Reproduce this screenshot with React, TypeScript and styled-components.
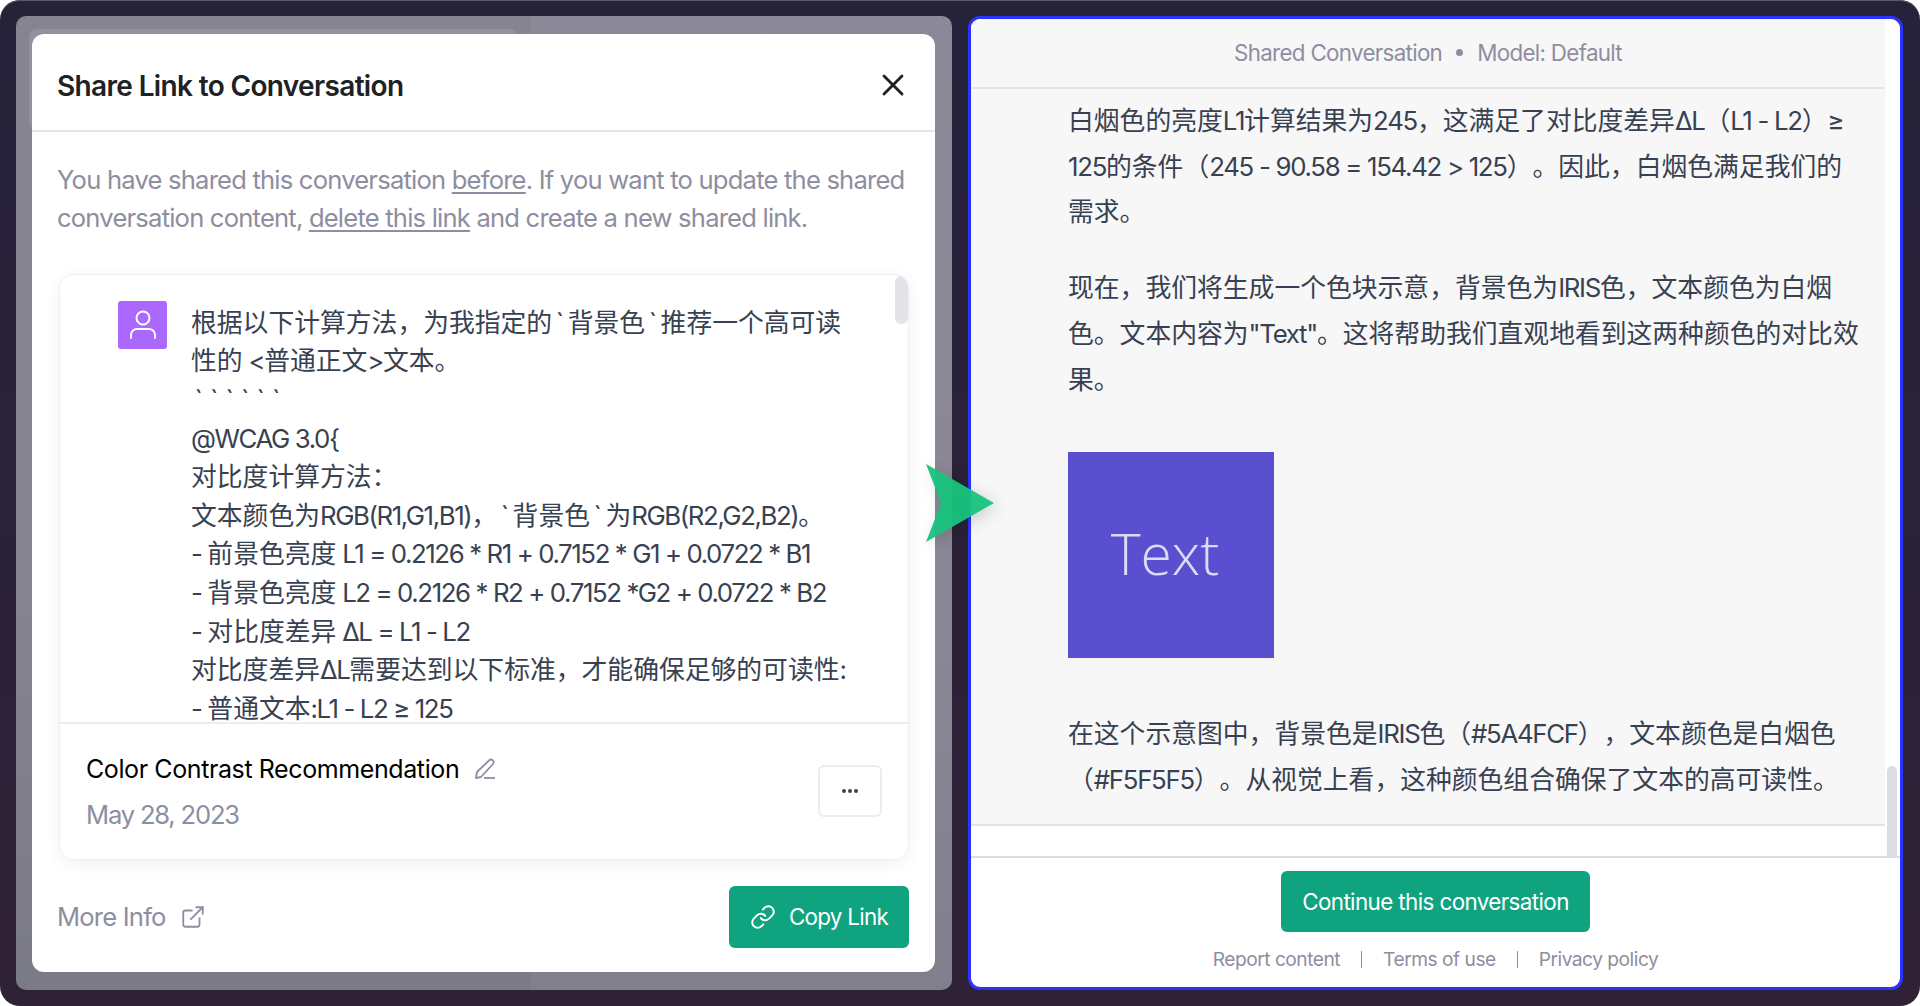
import { createGlobalStyle, styled } from "styled-components";
import { ExternalLink, Link, X } from "lucide-react";

const GlobalStyle = createGlobalStyle`
  html, body { margin: 0; padding: 0; background: #fff; }
  body { font-family: Inter, "Noto Sans CJK SC", sans-serif; }
`;

const Frame = styled.div`
  position: relative;
  width: 1920px;
  height: 1006px;
  box-sizing: border-box;
  padding: 16px;
  display: flex;
  gap: 16px;
  border-radius: 20px;
  overflow: hidden;
  background: linear-gradient(180deg, #25233a 0%, #2f2136 100%);
  box-shadow: inset 0 1px 0 #5a5966;
`;

const LeftPanel = styled.section`
  position: relative;
  width: 936px;
  height: 974px;
  box-sizing: border-box;
  padding: 18px 17px 18px 16px;
  border-radius: 10px;
  overflow: hidden;
  background: linear-gradient(180deg, #8b8997 0%, #8a8896 60%, #807f8c 100%);
`;

const DimHalf = styled.div`
  position: absolute;
  left: 0;
  top: 0;
  width: 515px;
  height: 100%;
  background: rgba(0, 0, 0, 0.035);
`;

const GhostCard = styled.div`
  position: absolute;
  left: 13px;
  top: 13px;
  width: 488px;
  height: 100px;
  border-radius: 8px;
  background: #93919f;
`;

const Modal = styled.div`
  position: relative;
  height: 938px;
  display: flex;
  flex-direction: column;
  border-radius: 12px;
  background: #fff;
  overflow: hidden;
`;

const ModalHeader = styled.header`
  height: 98px;
  flex: none;
  box-sizing: border-box;
  padding: 8px 26px 0 25px;
  display: flex;
  align-items: center;
  justify-content: space-between;
  border-bottom: 2px solid #e5e5e8;
`;

const ModalTitle = styled.h1`
  margin: 0;
  font-size: 28px;
  font-weight: 600;
  letter-spacing: -0.65px;
  color: #202123;
`;

const CloseButton = styled.span`
  display: flex;
  margin: -3px -2px 0 0;
  color: #202123;
`;

const Description = styled.p`
  margin: 29px 26px 0 25px;
  font-size: 25.6px;
  line-height: 38.4px;
  letter-spacing: -0.8px;
  color: #8e8ea0;
  white-space: nowrap;
  a { color: inherit; text-decoration: underline; text-underline-offset: 3px; }
`;

const Card = styled.div`
  margin: 36px 26px 0 27px;
  height: 584px;
  flex: none;
  display: flex;
  flex-direction: column;
  border: 1px solid #efeff2;
  border-radius: 14px;
  box-shadow: 0 4px 16px rgba(0, 0, 0, 0.06);
  overflow: hidden;
`;

const CardScroll = styled.div`
  position: relative;
  height: 449px;
  flex: none;
  box-sizing: border-box;
  padding: 26px 0 0 58px;
  display: flex;
  gap: 24px;
  overflow: hidden;
  border-bottom: 2px solid #ecedf1;
`;

const Thumb = styled.div`
  position: absolute;
  right: 0;
  top: 1px;
  width: 13px;
  height: 48px;
  border-radius: 6px;
  background: #e3e3ea;
`;

const Avatar = styled.div`
  flex: none;
  width: 49px;
  height: 48px;
  border-radius: 3px;
  background: #ab68ff;
  display: flex;
  align-items: center;
  justify-content: center;
`;

const Prompt = styled.div`
  margin-top: 3px;
  font-size: 25.8px;
  line-height: 38.6px;
  letter-spacing: -1.4px;
  color: #374151;
  white-space: pre;
  text-spacing-trim: space-all;
`;

const Han = styled.span`
  letter-spacing: 0;
`;

const Tick = styled.span`
  display: inline-block;
  width: 15.5px;
  letter-spacing: 0;
  text-align: center;
`;

const CardFooter = styled.div`
  flex: 1;
  box-sizing: border-box;
  padding: 0 26px;
  display: flex;
  align-items: center;
  justify-content: space-between;
`;

const CardMeta = styled.div`
  padding-top: 2px;
`;

const TitleRow = styled.div`
  display: flex;
  align-items: center;
  gap: 14px;
  font-size: 25px;
  letter-spacing: -0.4px;
  color: #000;
`;

const DateText = styled.div`
  margin-top: 15px;
  font-size: 25.6px;
  letter-spacing: -1.2px;
  color: #8e8ea0;
`;

const DotsButton = styled.div`
  width: 64px;
  height: 52px;
  box-sizing: border-box;
  border: 2px solid #ececf1;
  border-radius: 6px;
  display: flex;
  align-items: center;
  justify-content: center;
  gap: 2px;
`;

const Dot = styled.i`
  width: 4px;
  height: 4px;
  border-radius: 50%;
  background: #40414f;
`;

const ModalFooter = styled.footer`
  margin-top: 26px;
  padding: 0 26px 0 25px;
  display: flex;
  align-items: center;
  justify-content: space-between;
`;

const MoreInfo = styled.div`
  display: flex;
  align-items: center;
  gap: 14px;
  font-size: 25.6px;
  letter-spacing: -0.8px;
  color: #8e8ea0;
`;

const GreenButton = styled.div<{ $w: number; $h: number; $ls: number }>`
  width: ${(p) => p.$w}px;
  height: ${(p) => p.$h}px;
  border-radius: 6px;
  background: #10a37f;
  color: #fff;
  display: flex;
  align-items: center;
  justify-content: center;
  gap: 13px;
  font-size: 22.4px;
  letter-spacing: ${(p) => p.$ls}px;
`;

const RightPanel = styled.section`
  flex: 1;
  height: 974px;
  box-sizing: border-box;
  margin-right: 1px;
  display: flex;
  flex-direction: column;
  border: 3px solid #2b34ff;
  border-radius: 12px;
  overflow: hidden;
  background: #fff;
`;

const RightHeader = styled.header`
  height: 70px;
  flex: none;
  margin-right: 15px;
  box-sizing: border-box;
  padding-bottom: 2px;
  display: flex;
  align-items: center;
  justify-content: center;
  gap: 14px;
  background: #f7f7f8;
  border-bottom: 2px solid #e5e5e6;
  font-size: 22.4px;
  letter-spacing: -0.7px;
  color: #8e8ea0;
`;

const Bullet = styled.i`
  width: 7px;
  height: 7px;
  border-radius: 50%;
  background: #8e8ea0;
`;

const ScrollRow = styled.div`
  position: relative;
  height: 769px;
  flex: none;
  display: flex;
`;

const Article = styled.article`
  flex: 1;
  margin-right: 15px;
  height: 737px;
  box-sizing: border-box;
  padding: 9px 0 0 97px;
  background: #f7f7f8;
  border-bottom: 2px solid #e3e3e6;
  font-size: 25.8px;
  line-height: 45.7px;
  letter-spacing: -1.3px;
  color: #374151;
  overflow: hidden;
  text-spacing-trim: space-all;
`;

const Paragraph = styled.p`
  margin: 0 0 30px;
  white-space: pre;
`;

const Swatch = styled.div`
  width: 206px;
  height: 206px;
  box-sizing: border-box;
  padding: 0 12px 3px 0;
  margin: 50px 0 53px 0;
  background: #5a4fcf;
  color: #dcdaf5;
  display: flex;
  align-items: center;
  justify-content: center;
  font-family: "Open Sans", sans-serif;
  font-size: 57px;
  font-weight: 300;
  letter-spacing: 0;
`;

const SideThumb = styled.div`
  position: absolute;
  right: 3px;
  bottom: 0;
  width: 10px;
  height: 92px;
  border-radius: 6px 6px 0 0;
  background: #dcdce4;
`;

const RightFooter = styled.footer`
  flex: 1;
  border-top: 2px solid #dcdce4;
  margin-top: -2px;
  position: relative;
  display: flex;
  flex-direction: column;
  align-items: center;
  padding-top: 13px;
`;

const FooterLinks = styled.nav`
  margin-top: 15px;
  display: flex;
  align-items: center;
  gap: 21px;
  font-size: 19.2px;
  letter-spacing: -0.5px;
  color: #8e8ea0;
`;

const Pipe = styled.i`
  width: 1px;
  height: 17px;
  background: #8e8ea0;
`;

const Arrow = styled.svg`
  position: absolute;
  left: 926px;
  top: 464px;
  filter: drop-shadow(4px 4px 8px rgba(0, 0, 0, 0.16));
`;

// latin keeps the block's tight letter-spacing, CJK runs and backticks don't
function Mixed({ text }: { text: string }) {
  const parts = text.split(/(`|[\u3000-\u30ff\u3400-\u9fff\uff00-\uffef]+)/);
  return (
    <>
      {parts.map((part, i) => {
        if (part === "`") return <Tick key={i}>`</Tick>;
        if (i % 2 === 1) return <Han key={i}>{part}</Han>;
        return part;
      })}
    </>
  );
}

const promptText = [
  "根据以下计算方法，为我指定的`背景色`推荐一个高可读",
  "性的 <普通正文>文本。",
  "``````",
  "@WCAG 3.0{",
  "对比度计算方法：",
  "文本颜色为RGB(R1,G1,B1)，`背景色`为RGB(R2,G2,B2)。",
  "- 前景色亮度 L1 = 0.2126 * R1 + 0.7152 * G1 + 0.0722 * B1",
  "- 背景色亮度 L2 = 0.2126 * R2 + 0.7152 *G2 + 0.0722 * B2",
  "- 对比度差异 ΔL = L1 - L2",
  "对比度差异ΔL需要达到以下标准，才能确保足够的可读性:",
  "- 普通文本:L1 - L2 ≥ 125",
].join("\n");

export default function App() {
  return (
    <Frame>
      <GlobalStyle />
      <LeftPanel>
        <DimHalf />
        <GhostCard />
        <Modal>
          <ModalHeader>
            <ModalTitle>Share Link to Conversation</ModalTitle>
            <CloseButton>
              <X size={36} strokeWidth={1.9} />
            </CloseButton>
          </ModalHeader>
          <Description>
            You have shared this conversation <a>before</a>. If you want to update the shared
            <br />
            conversation content, <a>delete this link</a> and create a new shared link.
          </Description>
          <Card>
            <CardScroll>
              <Avatar>
                <svg width="28" height="30" viewBox="0 0 28 30" fill="none" stroke="#fff" strokeWidth="2">
                  <circle cx="14" cy="8" r="6.5" />
                  <path d="M2 28v-3a6 6 0 0 1 6-6h12a6 6 0 0 1 6 6v3" strokeLinecap="round" />
                </svg>
              </Avatar>
              <Prompt>
                <Mixed text={promptText} />
              </Prompt>
              <Thumb />
            </CardScroll>
            <CardFooter>
              <CardMeta>
                <TitleRow>
                  Color Contrast Recommendation
                  <svg width="24" height="24" viewBox="0 0 24 24" fill="none" stroke="#8e8ea0" strokeWidth="1.8" strokeLinejoin="round">
                    <path d="M3 21l1-6L16 3.5a2.5 2.5 0 0 1 4 3.5L8 20z" />
                    <path d="M11 21h11" />
                  </svg>
                </TitleRow>
                <DateText>May 28, 2023</DateText>
              </CardMeta>
              <DotsButton>
                <Dot />
                <Dot />
                <Dot />
              </DotsButton>
            </CardFooter>
          </Card>
          <ModalFooter>
            <MoreInfo>
              More Info
              <ExternalLink size={26} strokeWidth={1.7} />
            </MoreInfo>
            <GreenButton $w={180} $h={62} $ls={-0.7}>
              <Link size={26} strokeWidth={1.8} />
              Copy Link
            </GreenButton>
          </ModalFooter>
        </Modal>
      </LeftPanel>
      <RightPanel>
        <RightHeader>
          Shared Conversation
          <Bullet />
          Model: Default
        </RightHeader>
        <ScrollRow>
          <Article>
            <Paragraph>
              <Mixed text={"白烟色的亮度L1计算结果为245，这满足了对比度差异ΔL（L1 - L2）≥\n125的条件（245 - 90.58 = 154.42 > 125）。因此，白烟色满足我们的\n需求。"} />
            </Paragraph>
            <Paragraph>
              <Mixed text={'现在，我们将生成一个色块示意，背景色为IRIS色，文本颜色为白烟\n色。文本内容为"Text"。这将帮助我们直观地看到这两种颜色的对比效\n果。'} />
            </Paragraph>
            <Swatch>Text</Swatch>
            <Paragraph>
              <Mixed text={"在这个示意图中，背景色是IRIS色（#5A4FCF），文本颜色是白烟色\n（#F5F5F5）。从视觉上看，这种颜色组合确保了文本的高可读性。"} />
            </Paragraph>
          </Article>
          <SideThumb />
        </ScrollRow>
        <RightFooter>
          <GreenButton $w={309} $h={61} $ls={-0.6}>Continue this conversation</GreenButton>
          <FooterLinks>
            Report content
            <Pipe />
            Terms of use
            <Pipe />
            Privacy policy
          </FooterLinks>
        </RightFooter>
      </RightPanel>
      <Arrow width="68" height="78" viewBox="0 0 68 78">
        <path d="M0 0L68 39L0 78L15 39Z" fill="#19c37d" fillOpacity="0.95" />
      </Arrow>
    </Frame>
  );
}
